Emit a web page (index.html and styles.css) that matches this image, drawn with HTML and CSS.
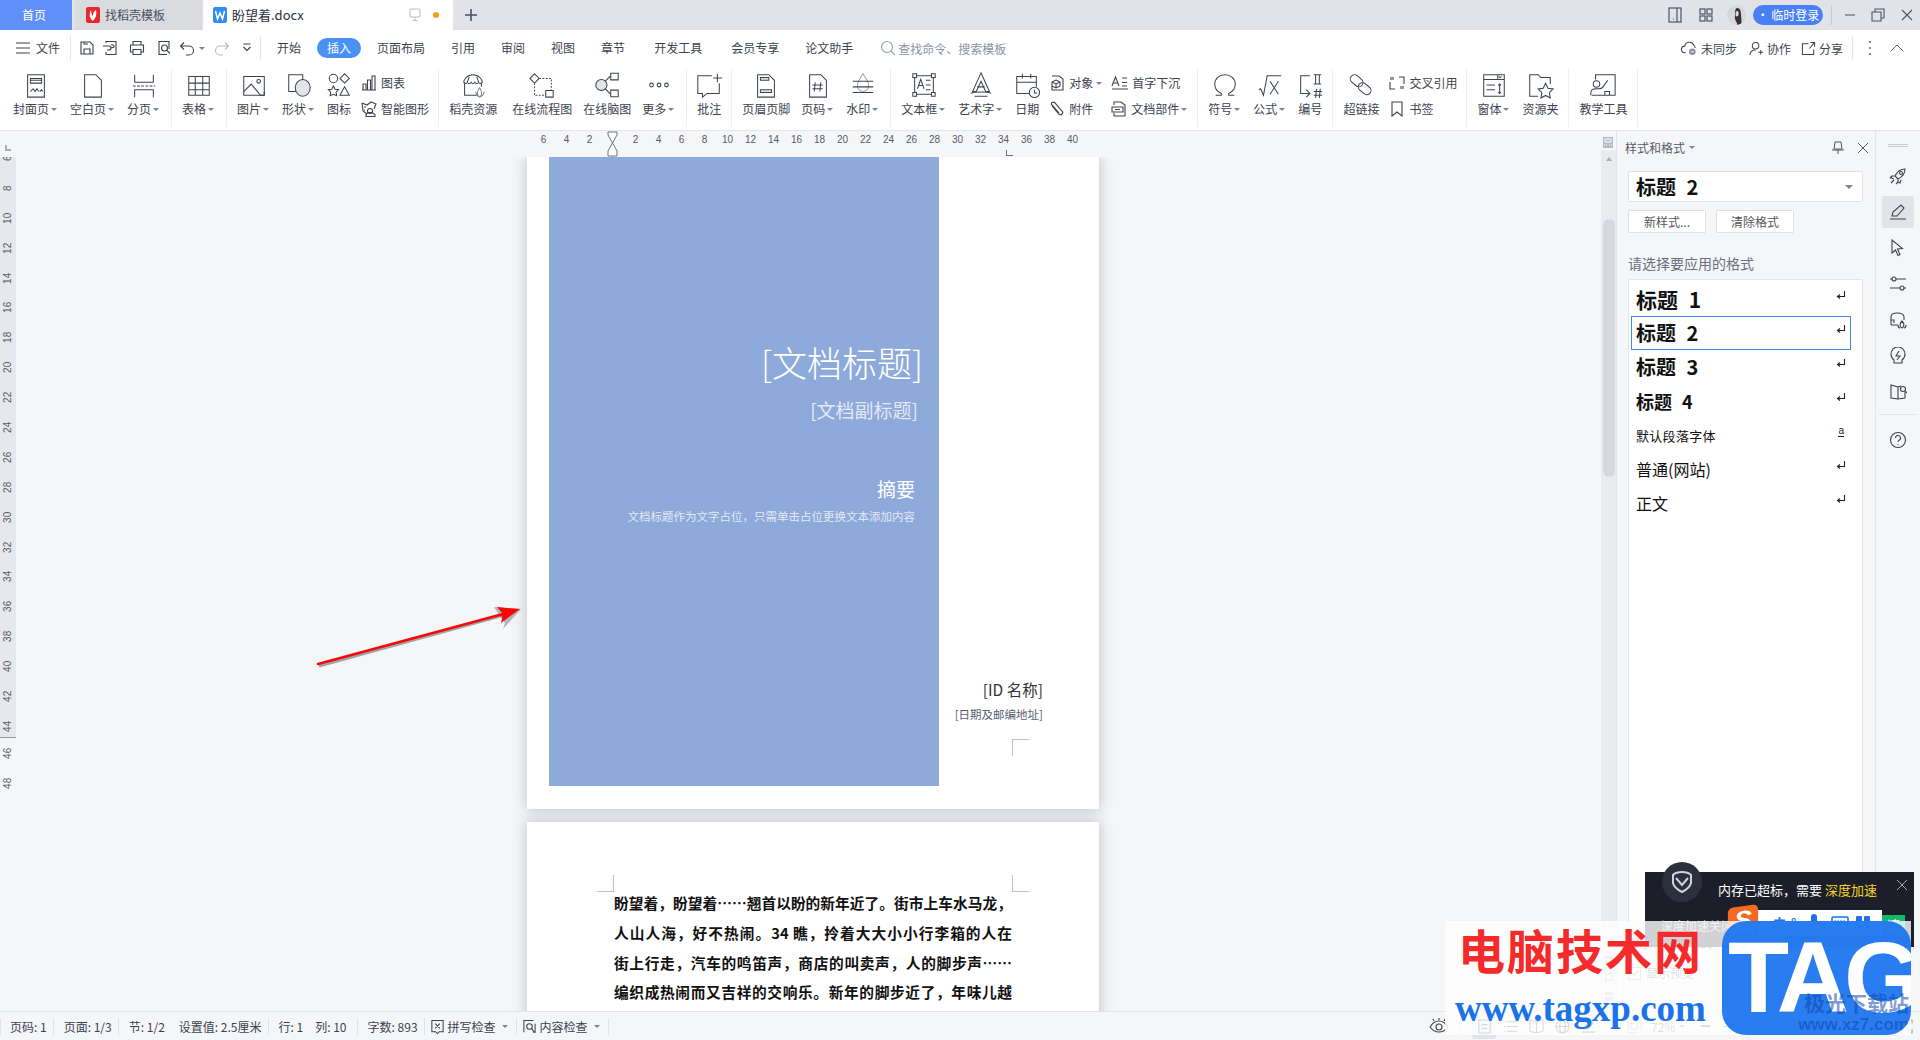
FILE: index.html
```html
<!DOCTYPE html>
<html lang="zh-CN">
<head>
<meta charset="utf-8">
<title>盼望着.docx</title>
<link rel="stylesheet" href="styles.css">
</head>
<body>
<header class="titlebar">
  <div class="tab tab-home">首页</div>
  <div class="tab tab-tpl">
    <svg class="tab-ico" viewBox="0 0 14 16"><rect width="14" height="16" rx="2" fill="#e8262d"/><path d="M7 14C3 11 3 7 5 3c0 3 1 5 2 6 0-3 1-5 3-6 1 4 0 8-3 11z" fill="#fff"/></svg>
    <span>找稻壳模板</span>
  </div>
  <div class="tab tab-doc">
    <svg class="tab-ico" viewBox="0 0 14 16"><rect width="14" height="16" rx="2" fill="#2f8cf0"/><path d="M2.5 4l2 8 2.5-6 2.500 6 2-8" fill="none" stroke="#fff" stroke-width="1.500"/></svg>
    <span class="tab-name">盼望着.docx</span>
    <svg class="tab-mon" viewBox="0 0 12 14"><rect x="1" y="1" width="10" height="8" rx="1" fill="none" stroke="#b9bcc4"/><path d="M6 9v3M3.500 12.500h5" stroke="#b9bcc4" fill="none"/></svg>
    <span class="tab-dot"></span>
  </div>
  <div class="tab-add">
    <svg viewBox="0 0 14 14" class="s14"><path d="M7 1v12M1 7h12" stroke="#4a5266" stroke-width="1.600" fill="none"/></svg>
  </div>
  <div class="win">
    <svg class="win-ico" viewBox="0 0 14 16"><rect x="1" y="1" width="12" height="14" fill="none" stroke="#4b5568" stroke-width="1.200"/><path d="M9 1v14M5 12h1" stroke="#4b5568" stroke-width="1.200"/></svg>
    <svg class="win-ico win-grid" viewBox="0 0 14 14"><g fill="none" stroke="#4b5568" stroke-width="1.200"><rect x="1" y="1" width="5" height="5"/><rect x="8" y="1" width="5" height="5"/><rect x="1" y="8" width="5" height="5"/><rect x="8" y="8" width="5" height="5"/></g></svg>
    <div class="avatar"><svg viewBox="0 0 19 20"><rect width="19" height="20" fill="#d3d9d8"/><path d="M10 3c3 0 4 3 4 6 0 4 1 7 0 11H10c1-3-3-4-2-9 0-3 0-8 2-8z" fill="#3b3034"/><path d="M10 6c1.500 0 2 2 1.500 4C11 12 8.500 12 8.500 9.500 8.500 8 9 6 10 6z" fill="#eed9cf"/></svg></div>
    <div class="login">• 临时登录</div>
    <span class="win-sep"></span>
    <svg class="win-btn" viewBox="0 0 12 12"><path d="M1 6h10" stroke="#4b5568" fill="none"/></svg>
    <svg class="win-btn win-b2" viewBox="0 0 14 14"><path d="M4 4V1h9v9h-3M1 4h9v9H1z" stroke="#4b5568" fill="none" stroke-width="1.100"/></svg>
    <svg class="win-btn win-b3" viewBox="0 0 12 12"><path d="M1 1l10 10M11 1L1 11" stroke="#4b5568" fill="none" stroke-width="1.100"/></svg>
  </div>
</header>

<nav class="menubar">
  <svg class="ham" viewBox="0 0 14 12"><path d="M0 1h14M0 6h14M0 11h14" stroke="#3c4350" fill="none"/></svg>
  <span class="file">文件</span>
  <span class="mb-sep"></span>
  <div class="quick">
    <span class="q q22"><svg viewBox="0 0 16 16" class="s16"><path d="M2 2h9l3 3v9H2zM5 14V9h6v5M5 2v2h4" class="i"/></svg></span>
    <span class="q q24"><svg viewBox="0 0 16 16" class="s16"><path d="M4 3V1.500h10v13H4V12M1 6h6a2 2 0 0 1 0 4H5M9 5a2 2 0 0 1 3 2l-3 1" class="i"/></svg></span>
    <span class="q q30"><svg viewBox="0 0 16 16" class="s16"><path d="M4 5V1.500h8V5M4 12H1.500V5h13v7H12M4 9.500h8v5H4z" class="i"/></svg></span>
    <span class="q q24"><svg viewBox="0 0 16 16" class="s16"><path d="M13 9V1.500H3v13h8" class="i"/><circle cx="8.500" cy="8" r="3" class="i"/><path d="M11 10.500l3 3" class="i"/></svg></span>
    <span class="q q22"><svg viewBox="0 0 16 16" class="s16"><path d="M2 6h8a4.500 4.500 0 0 1 0 9H7M5 2.500L1.500 6 5 9.500" class="i"/></svg></span>
    <span class="q q8"><i class="caret"></i></span>
    <span class="q q32"><svg viewBox="0 0 16 16" class="s16"><path d="M14 6H6a4.500 4.500 0 0 0 0 9h3M11 2.500L14.500 6 11 9.500" class="i i-off"/></svg></span>
    <span class="q q18"><svg viewBox="0 0 10 10" class="s10"><path d="M1.500 1h7M1.500 4l3.500 3.500L8.500 4" class="i"/></svg></span>
  </div>
  <span class="mb-sep mb-sep2"></span>
  <div class="tabs">
    <span class="mt">开始</span>
    <span class="mt mt-on">插入</span>
    <span class="mt">页面布局</span>
    <span class="mt">引用</span>
    <span class="mt">审阅</span>
    <span class="mt">视图</span>
    <span class="mt">章节</span>
    <span class="mt mt-wide">开发工具</span>
    <span class="mt mt-wide">会员专享</span>
    <span class="mt">论文助手</span>
  </div>
  <div class="search">
    <svg viewBox="0 0 16 16" class="s16"><circle cx="7" cy="7" r="5.500" fill="none" stroke="#9aa3b5" stroke-width="1.200"/><path d="M11 11l4 4" stroke="#9aa3b5" stroke-width="1.200"/></svg>
    <span>查找命令、搜索模板</span>
  </div>
  <div class="mb-right">
    <span class="act"><svg viewBox="0 0 18 16" class="s17"><path d="M5 13H4a3.500 3.500 0 0 1 0-7 5 5 0 0 1 9.500-1A4 4 0 0 1 15 8" class="i"/><circle cx="12" cy="12" r="3.500" fill="#8a93a3"/><path d="M10.500 12h3" stroke="#fff"/></svg>未同步</span>
    <span class="act"><svg viewBox="0 0 16 16" class="s15"><circle cx="7" cy="5" r="3.500" class="i"/><path d="M1 15c0-4 2-5.500 6-5.500M10 12h5M12.500 9.500v5" class="i"/></svg>协作</span>
    <span class="act"><svg viewBox="0 0 16 16" class="s15"><path d="M8 3H1.500v11.500h12V9M9 8l5-6M10 1.500h4.500V6" class="i"/></svg>分享</span>
    <span class="mb-sep mb-sep3"></span>
    <svg viewBox="0 0 4 16" class="dots"><circle cx="2" cy="2" r="1.100" fill="#6b7280"/><circle cx="2" cy="8" r="1.100" fill="#6b7280"/><circle cx="2" cy="14" r="1.100" fill="#6b7280"/></svg>
    <svg viewBox="0 0 14 8" class="chev"><path d="M0.500 7.500L7 1l6.500 6.500" fill="none" stroke="#5f6675"/></svg>
  </div>
</nav>

<section class="ribbon">
  <div class="group">
    <div class="item"><svg class="ic" viewBox="0 0 30 30"><path d="M6 4h18v24H6zM9 8h12v5H9zM9 10h12" class="i"/><path d="M9 22l3-3 2 3 2-3 2 3M19 22l2-2 1 2" class="i"/></svg><div class="lb">封面页<i class="caret"></i></div></div>
    <div class="item"><svg class="ic" viewBox="0 0 30 30"><path d="M6 4h12l6 6v18H6z" class="i"/></svg><div class="lb">空白页<i class="caret"></i></div></div>
    <div class="item"><svg class="ic" viewBox="0 0 30 30"><path d="M5 4v8h20V4M5 28v-8h20v8" class="i"/><path d="M3 16h24" class="i dash"/></svg><div class="lb">分页<i class="caret"></i></div></div>
  </div>
  <div class="group">
    <div class="item"><svg class="ic" viewBox="0 0 30 30"><path d="M4 6h22v20H4zM4 13h22M4 20h22M11 6v20M19 6v20" class="i"/></svg><div class="lb">表格<i class="caret"></i></div></div>
  </div>
  <div class="group">
    <div class="item"><svg class="ic" viewBox="0 0 30 30"><path d="M4 6h22v20H4z" class="i"/><path d="M4 22l8-8 10 12h4V22" class="i"/><circle cx="20" cy="11" r="2" class="i"/></svg><div class="lb">图片<i class="caret"></i></div></div>
    <div class="item"><svg class="ic" viewBox="0 0 30 30"><path d="M4 4h15v18H4z" class="i"/><ellipse cx="19" cy="18" rx="8" ry="9" fill="#e3e4e8" stroke="#3c4350" stroke-width="1.100"/></svg><div class="lb">形状<i class="caret"></i></div></div>
    <div class="item"><svg class="ic" viewBox="0 0 30 30"><circle cx="9" cy="8" r="4.500" class="i"/><path d="M21 3l5 5-5 5-5-5zM9 16l1.800 3.500 3.700.5-2.700 2.700.7 3.800L9 25l-3.500 1.500.7-3.800L3.500 20l3.700-.5zM21 17l5 9H16z" class="i"/></svg><div class="lb">图标</div></div>
    <div class="col">
      <div class="mini"><svg class="ics" viewBox="0 0 16 16"><path d="M2 15V9h3v6zM6.500 15V5h3v10zM11 15V1h3v14zM1 15h14" class="i"/></svg><span>图表</span></div>
      <div class="mini"><svg class="ics" viewBox="0 0 16 16"><path d="M1 2l5 2 4-3 5 2-2 5" class="i"/><path d="M1 2l1 8 4 3M3 6h2M3 9h1" class="i"/><circle cx="9" cy="10" r="2.500" class="i"/><path d="M5 15.500h9v-2l-3-2H7l-2 2z" class="i"/></svg><span>智能图形</span></div>
    </div>
  </div>
  <div class="group">
    <div class="item"><svg class="ic" viewBox="0 0 30 30"><path d="M5 12c0-2 3-8 10-8s10 6 10 8M6 12v14h13M24 12v5" class="i"/><path d="M5 12q2 3 4 0q2 3 4 0q2 3 4 0q2 3 4 0q2 3 4 0M11 6l-2 6M19 6l2 6" class="i"/><path d="M22 28c-3-2-3-6 0-10 3 4 3 8 0 10zM22 28c-2-1-4-2-4-6M22 28c2-1 5-2 5-6" class="i i-g"/></svg><div class="lb">稻壳资源</div></div>
    <div class="item item-gap"><svg class="ic" viewBox="0 0 30 30"><path d="M7 3l5 5-5 5-5-5z" class="i"/><path d="M12 8h13v12M7 13v13h12" class="i dash2"/><path d="M19 21h8v7h-8z" class="i"/></svg><div class="lb">在线流程图</div></div>
    <div class="item"><svg class="ic" viewBox="0 0 30 30"><circle cx="9" cy="15" r="6" fill="#e3e4e8" stroke="#3c4350" stroke-width="1.100"/><path d="M13 11l5-5h1M13 19l5 5h1" class="i"/><path d="M19 2.500h8v7h-8zM19 20.500h8v7h-8z" class="i"/></svg><div class="lb">在线脑图</div></div>
    <div class="item"><svg class="ic" viewBox="0 0 30 30"><circle cx="7" cy="15" r="2" class="i"/><circle cx="15" cy="15" r="2" class="i"/><circle cx="23" cy="15" r="2" class="i"/></svg><div class="lb">更多<i class="caret"></i></div></div>
  </div>
  <div class="group">
    <div class="item"><svg class="ic" viewBox="0 0 30 30"><path d="M18 5H3v19h5v4l5-4h13V13" class="i"/><path d="M24 3v9M19.500 7.500H29" class="i"/></svg><div class="lb">批注</div></div>
  </div>
  <div class="group">
    <div class="item"><svg class="ic" viewBox="0 0 30 30"><path d="M6 4h12l6 6v18H6z" class="i"/><path d="M9 7h9v3H9zM9 20h12v3H9z" class="i i-fill"/></svg><div class="lb">页眉页脚</div></div>
    <div class="item"><svg class="ic" viewBox="0 0 30 30"><path d="M6 4h12l6 6v18H6z" class="i"/><path d="M12 12l-1 10M18 12l-1 10M9 15h11M9 19h11" class="i"/></svg><div class="lb">页码<i class="caret"></i></div></div>
    <div class="item"><svg class="ic" viewBox="0 0 30 30"><path d="M15 3c-3 5-6 8-6 13a6 6 0 0 0 12 0c0-5-3-8-6-13z" class="i i-l"/><path d="M4 11h22M4 17h22M4 23h22" class="i"/></svg><div class="lb">水印<i class="caret"></i></div></div>
  </div>
  <div class="group">
    <div class="item"><svg class="ic" viewBox="0 0 30 30"><path d="M5 5h20v20H5z" class="i"/><path d="M3 3h4v4H3zM23 3h4v4h-4zM3 23h4v4H3zM23 23h4v4h-4z" class="i i-w"/><path d="M8 19l3.500-10L15 19M9.300 15.500h4.500M17 10h5M17 15h5M17 20h5" class="i"/></svg><div class="lb">文本框<i class="caret"></i></div></div>
    <div class="item"><svg class="ic" viewBox="0 0 30 30"><path d="M15 2L6 22h4l5-11 5 11h4z" class="i"/><path d="M11 17h8M4 24c4-2 18-2 22 0M8 27h14" class="i"/></svg><div class="lb">艺术字<i class="caret"></i></div></div>
    <div class="item"><svg class="ic" viewBox="0 0 30 30"><path d="M17 24H4V6h21v11M4 12h21M10 3v5M19 3v5" class="i"/><circle cx="23" cy="23" r="5.500" class="i"/><path d="M23 20v3.500h3" class="i"/></svg><div class="lb">日期</div></div>
    <div class="col">
      <div class="mini"><svg class="ics" viewBox="0 0 16 16"><path d="M3 1h7l4 3v11H3V11" class="i"/><path d="M7 5l4 2v4l-4 2-4-2V7zM3 7l4 2 4-2M7 9v4" class="i"/></svg><span>对象</span><i class="caret"></i></div>
      <div class="mini"><svg class="ics" viewBox="0 0 16 16"><path d="M3 5l7 8c2 2 5-1 3-3L6 2C4 0 1 2 3 4l7 8" class="i"/></svg><span>附件</span></div>
    </div>
    <div class="col col-b">
      <div class="mini mini-b"><svg class="ics ics-w" viewBox="0 0 18 16"><path d="M1 11l3.500-9L8 11M2 8h5M1 14h16M11 3h5M11 7.500h5M11 11h5" class="i"/></svg><span>首字下沉</span></div>
      <div class="mini mini-c"><svg class="ics" viewBox="0 0 16 16"><path d="M3 4V1h7l4 3v11H3v-3M1 6h11v5H1zM4 8.500h5" class="i"/></svg><span>文档部件</span><i class="caret"></i></div>
    </div>
  </div>
  <div class="group">
    <div class="item"><svg class="ic" viewBox="0 0 30 30"><path d="M5 26h6v-2C6 22 4 18 4 14 4 8 9 4 15 4s11 4 11 10c0 4-2 8-7 10v2h6" class="i"/></svg><div class="lb">符号<i class="caret"></i></div></div>
    <div class="item"><svg class="ic" viewBox="0 0 30 30"><path d="M3 20l2-1 3 7 4-21h15M15 11l9 14M24 11l-9 14" class="i"/></svg><div class="lb">公式<i class="caret"></i></div></div>
    <div class="item"><svg class="ic" viewBox="0 0 30 30"><path d="M15 5H5v19h9M11 20l4 4-4 4" class="i"/><path d="M19 4h8M19 14h8M21 4v10M25 4v10M19 22h9M19 26h9M22 19l-1 10M26 19l-1 10" class="i"/></svg><div class="lb">编号</div></div>
  </div>
  <div class="group">
    <div class="item"><svg class="ic" viewBox="0 0 30 30"><g transform="rotate(40 15 15)"><rect x="1" y="10" width="15" height="9" rx="4.500" class="i"/><rect x="13" y="11" width="15" height="9" rx="4.500" class="i"/></g></svg><div class="lb">超链接</div></div>
    <div class="col">
      <div class="mini"><svg class="ics" viewBox="0 0 16 16"><path d="M1 7v7h5M15 9V2h-5M4 2v3M2 2v3M12 11v3M14 11v3" class="i"/></svg><span>交叉引用</span></div>
      <div class="mini"><svg class="ics" viewBox="0 0 16 16"><path d="M3 1h10v14l-5-4-5 4z" class="i"/></svg><span>书签</span></div>
    </div>
  </div>
  <div class="group">
    <div class="item"><svg class="ic" viewBox="0 0 30 30"><path d="M4 4h22v23H4zM4 9h22M19 4v5M20 6l1.500 1L23 6M7 15h9M7 20h9M21 14v10M19.500 15.500L21 14l1.500 1.500M19.500 22.500L21 24l1.500-1.500" class="i"/></svg><div class="lb">窗体<i class="caret"></i></div></div>
    <div class="item"><svg class="ic" viewBox="0 0 30 30"><path d="M13 27H4V4h9l3 3h10v7" class="i"/><path d="M21 13l2.500 5.500 5.500.7-4 4 1 5.800-5-2.800-5 2.800 1-5.800-4-4 5.500-.7z" class="i"/></svg><div class="lb">资源夹</div></div>
  </div>
  <div class="group">
    <div class="item"><svg class="ic" viewBox="0 0 30 30"><path d="M7 9V4h21v22H3M17 26v-4h5v4" class="i"/><circle cx="8" cy="14" r="3.500" class="i"/><path d="M2 26v-3c0-3 3-4 6-4s5 1 7-2l5-7" class="i"/></svg><div class="lb">教学工具</div></div>
  </div>
</section>

<main class="work">
  <aside class="vruler">
    <div class="vcorner"><span></span></div>
    <div class="vband">
      <b>6</b><b>8</b><b>10</b><b>12</b><b>14</b><b>16</b><b>18</b><b>20</b><b>22</b><b>24</b><b>26</b><b>28</b><b>30</b><b>32</b><b>34</b><b>36</b><b>38</b><b>40</b><b>42</b><b>44</b>
    </div>
    <div class="vrest"><b>46</b><b>48</b></div>
  </aside>

  <div class="docarea">
    <div class="hruler">
      <b>6</b><b>4</b><b>2</b>
      <b class="h0"><svg viewBox="0 0 11 26" class="hour"><path d="M1 1h9v3L5.500 12 1 4zM5.500 12L10 20v5H1v-5z" fill="#fff" stroke="#6b7280"/></svg></b>
      <b>2</b><b>4</b><b>6</b><b>8</b><b>10</b><b>12</b><b>14</b><b>16</b><b>18</b><b>20</b><b>22</b><b>24</b><b>26</b><b>28</b><b>30</b><b>32</b><b class="h34">34<i></i></b><b>36</b><b>38</b><b>40</b>
    </div>
    <div class="view">
      <article class="page page1">
        <div class="cover">
          <h1 class="c-title">[文档标题]</h1>
          <p class="c-sub">[文档副标题]</p>
          <p class="c-abs">摘要</p>
          <p class="c-desc">文档标题作为文字占位，只需单击占位更换文本添加内容</p>
        </div>
        <div class="side">
          <p class="id">[ID 名称]</p>
          <p class="addr">[日期及邮编地址]</p>
          <div class="mark mark-tl"></div>
        </div>
      </article>
      <article class="page page2">
        <div class="marks"><div class="mark mark-bl"></div><div class="mark mark-br"></div></div>
        <div class="body">
          <p>盼望着，盼望着……翘首以盼的新年近了。街市上车水马龙，</p>
          <p>人山人海，好不热闹。34 瞧，拎着大大小小行李箱的人在</p>
          <p>街上行走，汽车的鸣笛声，商店的叫卖声，人的脚步声……</p>
          <p>编织成热闹而又吉祥的交响乐。新年的脚步近了，年味儿越</p>
        </div>
      </article>
    </div>
  </div>

  <div class="scroll">
    <div class="sc-top"><svg viewBox="0 0 10 11" class="sc-ico"><rect width="10" height="11" fill="#b6bac4"/><path d="M2 2h6v3H2zM1 8h1M3 8h1M6 8h1M8 8h1" stroke="#fff" fill="none"/></svg></div>
    <div class="sc-track">
      <i class="up"></i>
      <div class="thumb"></div>
      <div class="sc-bottom">
        <i class="down"></i>
        <i class="dbl"></i>
        <i class="sq"></i>
        <i class="dbl dbl-d"></i>
      </div>
    </div>
  </div>

  <section class="panel">
    <div class="p-head">
      <span>样式和格式</span><i class="caret"></i>
      <svg viewBox="0 0 14 14" class="p-pin"><path d="M4 1h6l1 7H3zM1 9h12M7 9v4" fill="none" stroke="#4b5568"/></svg>
      <svg viewBox="0 0 12 12" class="p-close"><path d="M1 1l10 10M11 1L1 11" fill="none" stroke="#4b5568"/></svg>
    </div>
    <div class="combo"><span class="h2">标题 2</span><i class="caret caret-big"></i></div>
    <div class="btns"><button class="btn">新样式...</button><button class="btn">清除格式</button></div>
    <div class="p-label">请选择要应用的格式</div>
    <div class="list">
      <div class="row"><span class="h1s">标题 1</span><svg class="ret" viewBox="0 0 10 10"><path d="M8.500 1v5.500H1.500M4 4.500L1.500 6.500 4 8.500" fill="none" stroke="#222" stroke-width="1.100"/></svg></div>
      <div class="row row-on"><span class="h2">标题 2</span><svg class="ret" viewBox="0 0 10 10"><path d="M8.500 1v5.500H1.500M4 4.500L1.500 6.500 4 8.500" fill="none" stroke="#222" stroke-width="1.100"/></svg></div>
      <div class="row"><span class="h3s">标题 3</span><svg class="ret" viewBox="0 0 10 10"><path d="M8.500 1v5.500H1.500M4 4.500L1.500 6.500 4 8.500" fill="none" stroke="#222" stroke-width="1.100"/></svg></div>
      <div class="row"><span class="h4s">标题 4</span><svg class="ret" viewBox="0 0 10 10"><path d="M8.500 1v5.500H1.500M4 4.500L1.500 6.500 4 8.500" fill="none" stroke="#222" stroke-width="1.100"/></svg></div>
      <div class="row"><span class="def">默认段落字体</span><span class="a-u">a</span></div>
      <div class="row"><span class="net">普通(网站)</span><svg class="ret" viewBox="0 0 10 10"><path d="M8.500 1v5.500H1.500M4 4.500L1.500 6.500 4 8.500" fill="none" stroke="#222" stroke-width="1.100"/></svg></div>
      <div class="row"><span class="net">正文</span><svg class="ret" viewBox="0 0 10 10"><path d="M8.500 1v5.500H1.500M4 4.500L1.500 6.500 4 8.500" fill="none" stroke="#222" stroke-width="1.100"/></svg></div>
    </div>
    <div class="p-show">显示：有效格式</div>
    <div class="p-foot">
      <span class="chk"><svg viewBox="0 0 12 12" class="s10"><path d="M2 6l3 3 5-6" fill="none" stroke="#666" stroke-width="1.200"/></svg></span>
      <span>显示预览</span>
      <span class="smart">智能排版</span>
    </div>
  </section>

  <aside class="rail">
    <div class="r-handle"></div>
    <div class="r-item"><svg viewBox="0 0 18 18" class="s18"><path d="M16 2c-5 0-8 3-10 7l3 3c4-2 7-5 7-10zM6 9H3l-1 2 3 1M9 12v3l2 1 1-3M5 13l-3 3M3 9l-2 2M9 15l-2 2" class="i"/><circle cx="12" cy="6" r="1.500" class="i"/></svg></div>
    <div class="r-item r-on"><svg viewBox="0 0 18 18" class="s18"><path d="M3 13l1-4 8-7 3 3-7 8zM1 16h16" class="i"/></svg></div>
    <div class="r-item"><svg viewBox="0 0 18 18" class="s18"><path d="M3 1v13l3.500-3 2.500 5.500 2-1L8.500 10l5-.5z" class="i"/></svg></div>
    <div class="r-item"><svg viewBox="0 0 18 18" class="s18"><circle cx="5" cy="4" r="2" class="i"/><circle cx="13" cy="13" r="2" class="i"/><path d="M7 4h10M1 4h2M1 13h10M15 13h2" class="i"/></svg></div>
    <div class="r-item"><svg viewBox="0 0 18 18" class="s18"><path d="M2 14V6c0-3 2-4 6-4s7 1 7 4v3M2 14h7M2 9h3v3" class="i"/><path d="M13 17c-2-1-3-4 0-7 3 3 2 6 0 7zM11 17c-2 0-2-2-2-3M15 17c2 0 2-2 2-3" class="i"/></svg></div>
    <div class="r-item"><svg viewBox="0 0 18 18" class="s18"><path d="M5 13c-2-1.500-3-3-3-6a7 7 0 0 1 14 0c0 3-1 4.500-3 6v3H5z" class="i"/><path d="M10 4l-3 5h4l-3 4" class="i"/></svg></div>
    <div class="r-item"><svg viewBox="0 0 18 18" class="s18"><path d="M9 4L2 2v13l7 1 7-1V9M9 4v12M9 4l3-1" class="i"/><circle cx="14" cy="6" r="2.500" class="i"/><path d="M16 8l2 2" class="i"/></svg></div>
    <div class="r-sep"></div>
    <div class="r-item"><svg viewBox="0 0 18 18" class="s18"><circle cx="9" cy="9" r="7.500" class="i"/><path d="M6.500 7a2.500 2.500 0 1 1 3.500 2.300c-.8.400-1 .8-1 1.700M9 13v1" class="i"/></svg></div>
  </aside>
</main>

<footer class="status">
  <span class="st">页码: 1</span>
  <span class="st">页面: 1/3</span>
  <span class="st st-n">节: 1/2</span>
  <span class="st st-l">设置值: 2.5厘米</span>
  <span class="st st-n">行: 1</span>
  <span class="st st-l2">列: 10</span>
  <span class="st">字数: 893</span>
  <span class="st st-i"><svg viewBox="0 0 16 16" class="s15"><path d="M2 1.500h12v12H10l-2 2-2-2H2zM5.500 5l5 5M10.500 5l-5 5" class="i"/></svg>拼写检查<i class="caret"></i></span>
  <span class="st st-i"><svg viewBox="0 0 16 16" class="s15"><path d="M2 14V1.500h10M14 5v9h-2" class="i"/><circle cx="8" cy="8" r="3" class="i"/><path d="M10 10l3 4" class="i"/></svg>内容检查<i class="caret"></i></span>
  <div class="st-right">
    <svg viewBox="0 0 20 16" class="st-eye"><path d="M1 9c3-5 6-6 9-6s6 1 9 6c-3 4-6 5-9 5s-6-1-9-5z" class="i"/><circle cx="10" cy="9" r="3" class="i"/><path d="M10 0v2M4 1l1 2M16 1l-1 2" class="i"/></svg>
    <span class="st-sep"></span>
    <span class="v v-on"><svg viewBox="0 0 16 16" class="s15"><path d="M2 1h12v14H2zM5 6h6M5 10h6" class="i"/></svg></span>
    <span class="v"><svg viewBox="0 0 16 16" class="s15"><path d="M4 3h11M4 8h11M4 13h11M1 3h1M1 8h1M1 13h1" class="i"/></svg></span>
    <span class="v"><svg viewBox="0 0 16 16" class="s15"><path d="M8 3L1 1v12l7 2 7-2V1zM8 3v12" class="i"/></svg></span>
    <span class="v"><svg viewBox="0 0 16 16" class="s15"><circle cx="8" cy="8" r="7" class="i"/><ellipse cx="8" cy="8" rx="3" ry="7" class="i"/><path d="M1 8h14" class="i"/></svg></span>
    <span class="v"><svg viewBox="0 0 16 16" class="s15"><path d="M3 11l1-3 7-6 2 2-6 7zM1 14h14" class="i"/></svg></span>
    <span class="st-fit"><svg viewBox="0 0 16 16" class="s15"><path d="M1 4v11h11M4 1h11v11M4 5h7v6H4z" class="i i-l"/></svg></span>
    <span class="st-zoom">72%<i class="caret"></i></span>
    <span class="st-minus"></span>
    <div class="slider"><span></span></div>
    <svg viewBox="0 0 12 12" class="s10 st-plus"><path d="M6 0v12M0 6h12" stroke="#4b5568" stroke-width="1.600" fill="none"/></svg>
    <svg viewBox="0 0 16 16" class="s15 st-full"><path d="M1 5V1h4M11 1h4v4M15 11v4h-4M5 15H1v-4M3 3l10 10M13 3L3 13" class="i i-l"/></svg>
  </div>
</footer>

<svg class="arrow" viewBox="0 0 240 90">
  <path d="M19 76L204 25" class="arrow-shadow"/>
  <path d="M199 25l6 8-2 6 18-20-27-2z" fill="#3a3a3a" opacity=".35"/>
  <path d="M18 74L203 24" class="arrow-line"/>
  <path d="M197 17l23 2-19 14 2-9z" fill="#f80707"/>
</svg>

<div class="popup">
  <div class="pop-badge"><svg viewBox="0 0 24 24" class="s24"><path d="M12 2c4 0 7 1 9 3v8c-1 4-5 7-9 9-4-2-8-5-9-9V5c2-2 5-3 9-3z" fill="none" stroke="#cfd3dc" stroke-width="2"/><path d="M6 8l6 7 6-7" fill="none" stroke="#cfd3dc" stroke-width="2"/></svg></div>
  <div class="pop-msg">内存已超标，需要 <em>深度加速</em></div>
  <svg viewBox="0 0 12 12" class="pop-x"><path d="M1 1l10 10M11 1L1 11" fill="none" stroke="#9ea3ae"/></svg>
  <div class="pop-sub">深度加速关闭</div>
</div>
<div class="ime">
  <span class="ime-s">S</span>
  <span class="ime-bar">
    <b>中</b>
    <b>°,</b>
    <svg viewBox="0 0 12 18" class="ime-ic"><rect x="3" y="0" width="6" height="11" rx="3" fill="#1a73e8"/><path d="M1 8c0 6 10 6 10 0M6 13v4" fill="none" stroke="#1a73e8" stroke-width="1.500"/></svg>
    <svg viewBox="0 0 18 14" class="ime-ic ime-kb"><rect x="1" y="1" width="16" height="12" rx="1" fill="none" stroke="#1a73e8" stroke-width="1.500"/><path d="M3 5h12M3 8h12" stroke="#1a73e8" stroke-dasharray="2 1"/></svg>
    <svg viewBox="0 0 14 14" class="ime-ic ime-gr"><rect width="6" height="6" rx="1" fill="#1a73e8"/><rect x="8" width="6" height="6" rx="1" fill="#1a73e8"/><rect y="8" width="6" height="6" rx="1" fill="#1a73e8"/><rect x="8" y="8" width="6" height="6" rx="1" fill="#1a73e8"/></svg>
  </span>
  <span class="ime-go">速</span>
</div>
<div class="wm">
  <div class="wm-left">
    <div class="wm-red">电脑技术网</div>
    <div class="wm-url">www.tagxp.com</div>
  </div>
  <div class="wm-tag">
    <span class="tag">TAG</span>
    <div class="jg"><div class="jg-a">极光下载站</div><div class="jg-b">www.xz7.com</div></div>
  </div>
</div>
</body>
</html>
```

FILE: styles.css
```css
* { box-sizing: border-box; }
html, body { margin: 0; padding: 0; }
body {
  width: 1920px; height: 1040px; overflow: hidden;
  display: flex; flex-direction: column;
  position: relative;
  font-family: "Noto Sans CJK SC", "Noto Sans", sans-serif;
  font-size: 12px; color: #3c4350; background: #f5f6f8;
}
p, h1 { margin: 0; font-weight: 400; }
svg { display: block; flex: none; }
.s10 { width: 10px; height: 10px; }
.s14 { width: 14px; height: 14px; }
.s15 { width: 15px; height: 15px; }
.s16 { width: 16px; height: 16px; }
.s17 { width: 17px; height: 16px; }
.s18 { width: 18px; height: 18px; }
.s24 { width: 24px; height: 24px; }
.i { fill: none; stroke: #3c4350; stroke-width: 1.100; }
.i-off { stroke: #b6b9c0; }
.i-l { stroke: #9ea3ae; }
.i-g { stroke: #7d8492; }
.i-w { fill: #fff; }
.i-fill { fill: #e3e4e8; }
.dash { stroke-dasharray: 3 1.500; }
.dash2 { stroke-dasharray: 2 1.500; }
.caret {
  display: inline-block; width: 0; height: 0; flex: none;
  border-left: 3px solid transparent; border-right: 3px solid transparent;
  border-top: 3.500px solid #7d8492;
}

/* title bar */
.titlebar { height: 30px; flex: none; display: flex; background: #e1e3e8; }
.tab { height: 30px; display: flex; align-items: center; line-height: 30px; }
.tab-home { width: 72px; justify-content: center; padding-right: 4px; background: #5f8ff8; color: #fff; margin-right: 3px; }
.tab-tpl { width: 127px; padding-left: 11px; background: #d9dbdf; margin-right: 1px; color: #4a5060; }
.tab-doc { width: 250px; padding-left: 10px; background: #fff; color: #2b3040; font-size: 13px; }
.tab-ico { width: 14px; height: 16px; margin-right: 5px; }
.tab-name { width: 177px; }
.tab-mon { width: 12px; height: 14px; }
.tab-dot { width: 6px; height: 6px; border-radius: 50%; background: #f0a11c; margin-left: 12px; }
.tab-add { width: 36px; display: flex; align-items: center; justify-content: center; }
.win { margin-left: auto; display: flex; align-items: center; padding-right: 7px; }
.win-ico { width: 14px; height: 16px; margin-right: 17px; }
.win-grid { height: 14px; margin-right: 14px; }
.avatar { width: 19px; height: 20px; border-radius: 50%; overflow: hidden; margin-right: 7px; }
.avatar svg { width: 19px; height: 20px; }
.login { width: 70px; height: 20px; border-radius: 10px; background: #4a80f5; color: #fff; line-height: 20px; text-align: center; }
.win-sep { width: 1px; height: 20px; background: #c9ccd3; margin: 0 12px 0 8px; }
.win-btn { width: 12px; height: 12px; }
.win-b2 { width: 14px; height: 14px; margin-left: 15px; }
.win-b3 { margin-left: 16px; }

/* menu bar */
.menubar { height: 36px; flex: none; display: flex; align-items: center; background: #fff; }
.ham { width: 14px; height: 12px; margin-left: 16px; }
.file { margin-left: 6px; line-height: 18px; }
.mb-sep { width: 1px; height: 24px; background: #e2e4e8; margin-left: 10px; }
.mb-sep2 { margin-left: 4px; }
.mb-sep3 { margin: 0 15px 0 9px; }
.quick { display: flex; align-items: center; margin-left: 5px; }
.q { display: flex; justify-content: center; align-items: center; height: 24px; }
.q22 { width: 22px; } .q24 { width: 24px; } .q30 { width: 30px; }
.q8 { width: 8px; } .q32 { width: 32px; } .q18 { width: 18px; }
.tabs { display: flex; align-items: center; margin-left: 3px; }
.mt { padding: 0 13px; line-height: 20px; height: 20px; white-space: nowrap; }
.mt-on { background: #4a90f5; color: #fff; border-radius: 10px; padding: 0 10px; margin: 0 3px; }
.mt-wide { margin-left: 3px; }
.search { display: flex; align-items: center; gap: 2px; margin-left: 14px; color: #8c93a3; }
.mb-right { margin-left: auto; display: flex; align-items: center; padding-right: 16px; }
.act { display: flex; align-items: center; gap: 3px; margin-left: 10px; }
.act:first-child { margin-right: 2px; }
.dots { width: 4px; height: 16px; }
.chev { width: 14px; height: 8px; margin-left: 18px; }

/* ribbon */
.ribbon { height: 65px; flex: none; display: flex; background: #fff; border-bottom: 1px solid #e6e7ea; padding: 3px 0 3px 3px; }
.group { display: flex; gap: 11px; padding: 0 10px; border-right: 1px solid #eeeff1; height: 58px; }
.item { display: flex; flex-direction: column; align-items: center; padding-top: 1px; }
.item-gap { margin-left: 4px; }
.ic { width: 28px; height: 28px; margin: 1px -4px; }
.lb { display: flex; align-items: center; height: 18px; line-height: 18px; white-space: nowrap; }
.lb .caret { margin: 0 2px 0 2px; }
.col { display: flex; flex-direction: column; gap: 8px; padding-top: 5px; margin-right: -1px; }
.col-b { margin-left: -9px; margin-right: 0; }
.mini { display: flex; align-items: center; height: 18px; line-height: 18px; white-space: nowrap; }
.mini .caret { margin-left: 3px; }
.ics { width: 16px; height: 16px; margin-right: 4px; margin-left: -1px; }
.ics-w { width: 18px; }
.mini-b .ics { margin: 0 3px 0 8px; }
.mini-c .ics { margin: 0 4px 0 8px; }
.mini-c .caret { margin-left: 2px; }

/* workspace */
.work { flex: 1; min-height: 0; display: flex; background: #f5f6f8; }
.vruler { width: 16px; flex: none; display: flex; flex-direction: column; }
.vcorner { height: 26px; display: flex; justify-content: center; align-items: flex-end; padding-bottom: 6px; flex: none; }
.vcorner span { width: 6px; height: 6px; border-left: 2px solid #a8adb9; border-bottom: 2px solid #a8adb9; }
.vruler b { display: block; height: 29.900px; line-height: 16px; writing-mode: vertical-rl; transform: rotate(180deg); text-align: center; font-weight: 400; font-size: 10px; color: #555c6b; width: 16px; font-family: "Liberation Sans", sans-serif; }
.vband { height: 581px; overflow: hidden; background: #e6e8ed; border-bottom: 1px solid #8f96a6; flex: none; }
.vband b:first-child { margin-top: -14px; }
.vrest { flex: 1; }

.docarea { flex: 1; min-width: 0; display: flex; flex-direction: column; position: relative; }
.hruler { height: 26px; flex: none; display: flex; padding-left: 516px; align-items: flex-start; }
.hruler b { width: 23px; flex: none; text-align: center; font-weight: 400; font-size: 10px; line-height: 18px; color: #555c6b; font-family: "Liberation Sans", sans-serif; position: relative; }
.h0 { display: flex; justify-content: center; }
.hour { width: 11px; height: 26px; }
.h34 i { position: absolute; left: 14px; top: 19px; width: 7px; height: 6px; border-left: 1px solid #6b7280; border-bottom: 1px solid #6b7280; }
.view { flex: 1; min-height: 0; overflow: hidden; padding: 0 0 0 511px; }
.page { width: 572px; background: #fff; box-shadow: 0 0 14px rgba(60,65,80,.3); }
.page1 { height: 652px; display: flex; padding-left: 22px; margin-bottom: 13px; }
.cover { width: 390px; height: 629px; background: #8eaadb; color: #fff; text-align: right; padding-right: 18px; flex: none; }
.c-title { font-size: 35px; line-height: 44px; padding-top: 183px; margin-right: -2px; box-sizing: content-box; font-weight: 300; }
.c-sub { font-size: 19px; line-height: 26px; margin-top: 13px; color: #e4e8f4; padding-right: 3px; }
.c-abs { font-size: 19px; line-height: 26px; margin-top: 53px; padding-right: 6px; }
.c-desc { font-size: 11.500px; line-height: 16px; margin-top: 6px; color: #e3e8f4; white-space: nowrap; padding-right: 6px; }
.side { flex: 1; padding-right: 56px; text-align: right; padding-top: 522px; }
.id { font-size: 15.500px; line-height: 20px; color: #333; }
.addr { font-size: 11.500px; line-height: 16px; margin-top: 7px; color: #555d70; white-space: nowrap; }
.mark { width: 17px; height: 17px; border: 0 solid #c2c2c2; }
.mark-tl { border-left-width: 1px; border-top-width: 1px; margin: 17px 0 0 73px; }
.page2 { height: 400px; padding: 53px 87px 0 87px; }
.marks { display: flex; justify-content: space-between; margin: 0 -17px; height: 17px; }
.mark-bl { border-right-width: 1px; border-bottom-width: 1px; }
.mark-br { border-left-width: 1px; border-bottom-width: 1px; }
.body { margin-top: -4px; }
.body p { line-height: 29.800px; height: 29.800px; text-align: justify; text-align-last: justify; white-space: nowrap; color: #111; font-weight: 700; font-size: 14.700px; }

/* scrollbar */
.scroll { width: 15px; flex: none; display: flex; flex-direction: column; }
.sc-top { height: 19px; flex: none; padding: 6px 0 0 2px; }
.sc-ico { width: 10px; height: 11px; }
.sc-track { flex: 1; background: #e9ebef; display: flex; flex-direction: column; align-items: center; padding-top: 7px; }
.up { width: 0; height: 0; border: 3.500px solid transparent; border-bottom: 4px solid #a8adb9; border-top: 0; }
.thumb { width: 12px; height: 258px; border-radius: 6px; background: #d5d8e0; margin-top: 58px; }
.sc-bottom { margin-top: auto; display: flex; flex-direction: column; align-items: center; gap: 9px; padding-bottom: 11px; }
.down { width: 0; height: 0; border: 3.500px solid transparent; border-top: 4px solid #a8adb9; border-bottom: 0; }
.dbl { width: 8px; height: 8px; border-top: 3px solid #b5b9c4; border-bottom: 3px solid #b5b9c4; }
.dbl-d { margin-top: 2px; }
.sq { width: 8px; height: 8px; border: 1px solid #a8adb9; }

/* side panel */
.panel { width: 260px; flex: none; border-left: 1px solid #e3e5ea; border-right: 1px solid #e3e5ea; padding: 0 12px 0 11px; display: flex; flex-direction: column; background: #f5f6f8; }
.p-head { height: 33px; flex: none; display: flex; align-items: center; margin: 0 -6px 1px -3px; color: #555c6b; }
.p-head .caret { margin-left: 4px; }
.p-pin { width: 14px; height: 14px; margin-left: auto; margin-right: 12px; }
.p-close { width: 12px; height: 12px; }
.combo { height: 31px; flex: none; margin-top: 6px; background: #fff; border: 1px solid #dfe1e6; border-radius: 2px; display: flex; align-items: center; justify-content: space-between; padding: 0 9px 0 7px; }
.caret-big { border-left-width: 4px; border-right-width: 4px; border-top: 4px solid #7d8492; }
.h2, .h1s, .h3s, .h4s { font-weight: 700; color: #111; word-spacing: 6px; white-space: nowrap; line-height: 30px; }
.h2 { font-size: 20px; }
.h1s { font-size: 21px; }
.h3s { font-size: 20px; }
.h4s { font-size: 18px; }
.btns { display: flex; gap: 10px; margin-top: 8px; flex: none; }
.btn { width: 78px; height: 23px; padding: 0; background: #fff; border: 1px solid #dfe1e6; border-radius: 1px; font: 12px/21px "Noto Sans CJK SC", sans-serif; color: #555; }
.p-label { margin-top: 20px; line-height: 20px; font-size: 14px; color: #6a7080; flex: none; }
.list { height: 643px; flex: none; margin-top: 6px; background: #fff; border: 1px solid #e3e5ea; border-radius: 2px; padding: 2px 0 0 2px; }
.row { width: 220px; height: 34px; display: flex; align-items: center; justify-content: space-between; padding: 0 4px 0 4px; border: 1px solid transparent; color: #111; }
.row-on { border-color: #4a86e8; }
.ret { width: 10px; height: 10px; margin-top: -8px; }
.def { font-size: 13px; letter-spacing: .3px; }
.net { font-size: 16px; }
.a-u { font-size: 10px; line-height: 10px; border-bottom: 1px solid #222; font-family: "Liberation Sans", sans-serif; margin: -8px 2px 0 0; color: #222; }
.p-show { margin-top: 12px; line-height: 18px; font-size: 12px; color: #666; flex: none; }
.p-foot { margin-top: 13px; display: flex; align-items: center; gap: 5px; color: #666; flex: none; line-height: 16px; }
.chk { width: 13px; height: 13px; border: 1px solid #9ea3ae; display: flex; align-items: center; justify-content: center; background: #fff; }
.smart { margin-left: auto; margin-right: 12px; color: #7a869e; }

/* right rail */
.rail { width: 44px; flex: none; display: flex; flex-direction: column; align-items: center; }
.r-handle { width: 20px; height: 3px; border-top: 1px solid #c9ccd3; border-bottom: 1px solid #c9ccd3; margin: 13px 0 11px; flex: none; }
.r-item { width: 32px; height: 32px; margin: 2px 0; flex: none; display: flex; align-items: center; justify-content: center; border-radius: 2px; }
.r-on { background: #e1e3e8; }
.r-sep { width: 38px; height: 1px; background: #e1e3e8; margin: 4px 0 7px; flex: none; }

/* status bar */
.status { height: 29px; flex: none; display: flex; align-items: center; background: #f5f6f8; border-top: 1px solid #e3e5ea; }
.st { display: flex; align-items: center; height: 17px; padding: 0 6px 0 10px; border-right: 1px solid #e0e2e7; line-height: 17px; white-space: nowrap; flex: none; }
.st:first-child { border-left: 1px solid #e0e2e7; padding-left: 9px; }
.st-n { border-right: 0; padding-right: 4px; }
.st-l { padding-left: 10px; }
.st-l2 { padding-left: 8px; padding-right: 10px; }
.st-i { padding-left: 5px; }
.st-i svg { margin-right: 3px; }
.st-i .caret { margin: 0 2px 0 6px; }
.st-right { margin-left: auto; display: flex; align-items: center; width: 493px; flex: none; }
.st-eye { width: 20px; height: 16px; margin-left: 2px; }
.st-sep { width: 1px; height: 17px; background: #e0e2e7; margin: 0 11px 0 11px; }
.v { width: 26px; height: 26px; display: flex; align-items: center; justify-content: center; }
.v-on { width: 24px; background: #e1e3e8; border-radius: 2px; margin-right: 1px; }
.st-fit { margin-left: 26px; }
.st-zoom { margin-left: 9px; display: flex; align-items: center; gap: 4px; color: #666; }
.st-minus { width: 9px; height: 2px; background: #4b5568; margin-left: 16px; }
.slider { width: 143px; height: 1px; background: #6b7280; margin-left: 13px; position: relative; }
.slider span { position: absolute; left: 42px; top: -6px; width: 12px; height: 12px; border-radius: 50%; border: 1px solid #4b5568; background: #f5f6f8; }
.st-plus { margin-left: 6px; }
.st-full { margin-left: 16px; }

/* overlays */
.arrow { position: absolute; left: 300px; top: 590px; width: 240px; height: 90px; overflow: visible; }
.arrow-line { stroke: #f80707; stroke-width: 2.500; fill: none; stroke-linecap: round; }
.arrow-shadow { stroke: rgba(40,40,40,.4); stroke-width: 3; fill: none; }
.popup { position: absolute; left: 1645px; top: 872px; width: 269px; height: 75px; background: #1c1f2a; color: #fff; }
.pop-badge { position: absolute; left: 17px; top: -10px; width: 40px; height: 40px; border-radius: 50%; background: #2c303c; display: flex; align-items: center; justify-content: center; }
.pop-msg { position: absolute; left: 73px; top: 8px; line-height: 20px; font-size: 13px; white-space: nowrap; }
.pop-msg em { font-style: normal; color: #f5d327; }
.pop-x { position: absolute; right: 6px; top: 7px; width: 12px; height: 12px; }
.pop-sub { position: absolute; left: 16px; top: 44px; font-size: 12px; line-height: 20px; color: #bfc2c9; }
.ime { position: absolute; left: 1728px; top: 905px; display: flex; align-items: flex-start; height: 32px; }
.ime-s { width: 30px; height: 28px; border-radius: 5px; transform: skew(-8deg) rotate(-8deg); background: #f26a22; color: #fff; font: italic 700 26px/28px "Liberation Sans", sans-serif; text-align: center; margin-top: 1px; flex: none; }
.ime-bar { width: 124px; height: 26px; margin-top: 5px; background: #fff; display: flex; align-items: center; padding-left: 15px; }
.ime-bar b { font-size: 13px; color: #1a73e8; width: 24px; font-weight: 700; line-height: 26px; }
.ime-ic { width: 12px; height: 18px; margin-left: -1px; margin-right: 12px; }
.ime-kb { width: 18px; height: 14px; margin-right: 8px; }
.ime-gr { width: 14px; height: 14px; }
.ime-go { width: 23px; height: 20px; margin-top: 10px; background: #12b76a; color: #fff; text-align: center; line-height: 20px; font-size: 13px; }
.wm { position: absolute; left: 1445px; top: 921px; width: 466px; height: 114px; background: rgba(255,255,255,.8); display: flex; }
.wm-left { width: 277px; flex: none; display: flex; flex-direction: column; align-items: center; padding-right: 6px; }
.wm-red { font-size: 47px; line-height: 58px; font-weight: 700; color: #f52a2a; margin-top: -1px; letter-spacing: 2px; white-space: nowrap; }
.wm-url { font: 700 37px/40px "Liberation Serif", serif; color: #1a73e8; margin-top: 11px; white-space: nowrap; }
.wm-tag { width: 189px; background: rgba(25,115,240,.93); border-radius: 24px; overflow: hidden; position: relative; }
.tag { display: block; font: 700 100px/100px "Liberation Sans", sans-serif; color: #fff; letter-spacing: -5px; padding-left: 6px; margin-top: 6px; white-space: nowrap; }
.jg { position: absolute; right: 2px; top: 68px; color: rgba(15,70,170,.55); text-align: right; }
.jg-a { font-size: 21px; line-height: 26px; font-weight: 700; }
.jg-b { font-size: 17px; line-height: 20px; font-family: "Liberation Sans", sans-serif; font-weight: 700; }
```
